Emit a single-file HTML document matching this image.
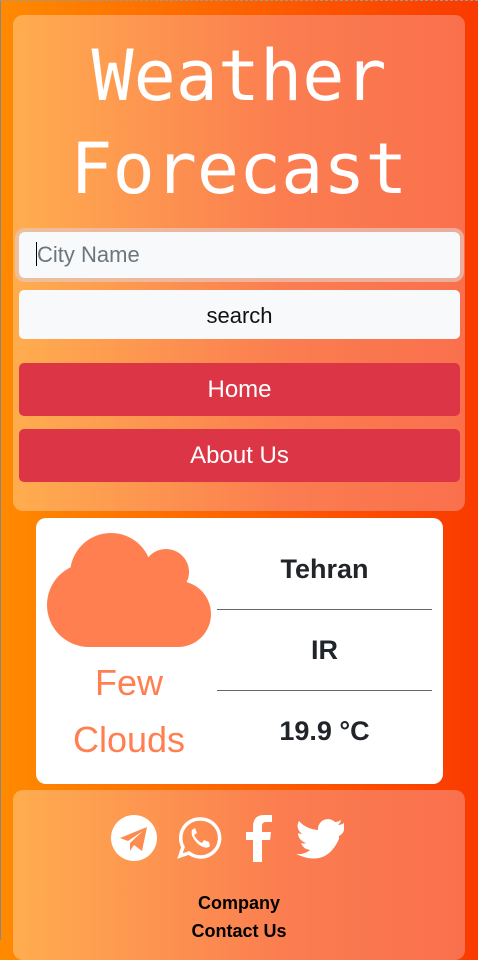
<!DOCTYPE html>
<html><head><meta charset="utf-8"><style>
*{box-sizing:border-box;margin:0;padding:0}
body{width:478px;height:940px;overflow:hidden;background:linear-gradient(90deg,#ff8a00,#fa3a00);font-family:"Liberation Sans",Arial,sans-serif;position:relative}
.panel{position:absolute;left:13px;width:452px;border-radius:10px;background:linear-gradient(90deg,#ffad4f,#fb7d50 60%,#fa704d)}
.title{position:absolute;left:0;width:478px;text-align:center;color:#fff;font-family:"DejaVu Sans Mono","Liberation Mono",monospace;font-size:70px;line-height:93px;top:30px}
.inp{position:absolute;left:19px;width:441px;top:232px;height:46px;background:#f8f9fa;border-radius:6px;box-shadow:0 0 0 4px rgba(230,200,190,.7);font-size:22px;color:#6c757d;padding:10px 0 0 17px}
.inp i{display:inline-block;width:1px;height:24px;background:#000;vertical-align:-4px}
.btn{position:absolute;left:19px;width:441px;border-radius:5px;text-align:center;font-size:22px}
.s{top:290px;height:49px;background:#f8f9fa;color:#111;line-height:51px}
.r{background:#dc3545;color:#fff;height:53px;line-height:53px;font-size:24px}
.card{position:absolute;left:36px;top:518px;width:407px;height:266px;background:#fff;border-radius:10px}
.few{position:absolute;left:0;width:186px;text-align:center;color:#ff7f50;font-size:36px;line-height:57px;top:136px}
.rc{position:absolute;left:181px;width:215px;text-align:center;font-weight:bold;font-size:27px;color:#212529}
.ln{position:absolute;left:181px;width:215px;height:1px;background:#666}
.ft{position:absolute;left:0;width:478px;text-align:center;font-weight:bold;font-size:18px;color:#000}
</style></head><body>
<div style="position:absolute;left:0;top:0;width:1px;height:940px;background:#888"></div>
<div style="position:absolute;left:0;top:0;width:478px;height:0;border-top:1px dashed #999"></div>
<div class="panel" style="top:15px;height:496px"></div>
<div class="title">Weather<br>Forecast</div>
<div class="inp"><i></i>City Name</div>
<div class="btn s">search</div>
<div class="btn r" style="top:363px">Home</div>
<div class="btn r" style="top:429px">About Us</div>
<div class="card">
<svg style="position:absolute;left:0;top:0" width="200" height="140" viewBox="36 518 200 140">
<g fill="#ff7f50"><circle cx="111" cy="574" r="41"/><circle cx="166" cy="572" r="23"/><circle cx="145" cy="585" r="25"/><circle cx="89" cy="605" r="42"/><circle cx="178" cy="614" r="33"/><rect x="89" y="585" width="90" height="62"/></g></svg>
<div class="few">Few<br>Clouds</div>
<div class="rc" style="top:36px">Tehran</div>
<div class="ln" style="top:91px"></div>
<div class="rc" style="top:117px">IR</div>
<div class="ln" style="top:172px"></div>
<div class="rc" style="top:198px">19.9 °C</div>
</div>
<div class="panel" style="top:790px;height:170px"></div>
<svg style="position:absolute;left:0;top:800px" width="478" height="70" viewBox="0 800 478 70">
<circle cx="134" cy="838" r="23" fill="#fff"/>
<path d="M120 838 L147 827 L142 851 L134 845 L130 851 L130 843 L143 831 L128 841 Z" fill="#fc8c50"/>
<path d="M200 819 a19 19 0 1 1 -11 34 l-9 3 l3-9 a19 19 0 0 1 17-28z" fill="none" stroke="#fff" stroke-width="3.5"/>
<path d="M192 830 q-2 6 6 14 q8 6 12 2 l-1-4 -5-2 -2 3 q-5-2-8-8 l3-2 -2-5z" fill="#fff"/>
<path d="M262 862 V840 H270 L271 832 H262 V826 Q262 822 266 822 H272 V815 H264 Q253 815 253 827 V832 H246 V840 H253 V862 Z" fill="#fff"/>
<path d="M344 823 q-3 2-6 2 q3-3 3-5 q-3 2-6 2 a10 10 0 0 0-17 8 q-12-1-19-9 q-4 7 3 13 q-2 0-4-1 q0 7 8 10 q-2 1-5 0 q2 6 9 7 q-6 5-14 4 q30 14 43-15 q0-2 0-3 q4-2 5-6z" fill="#fff"/>
</svg>
<div class="ft" style="top:893px">Company</div>
<div class="ft" style="top:921px">Contact Us</div>
</body></html>
